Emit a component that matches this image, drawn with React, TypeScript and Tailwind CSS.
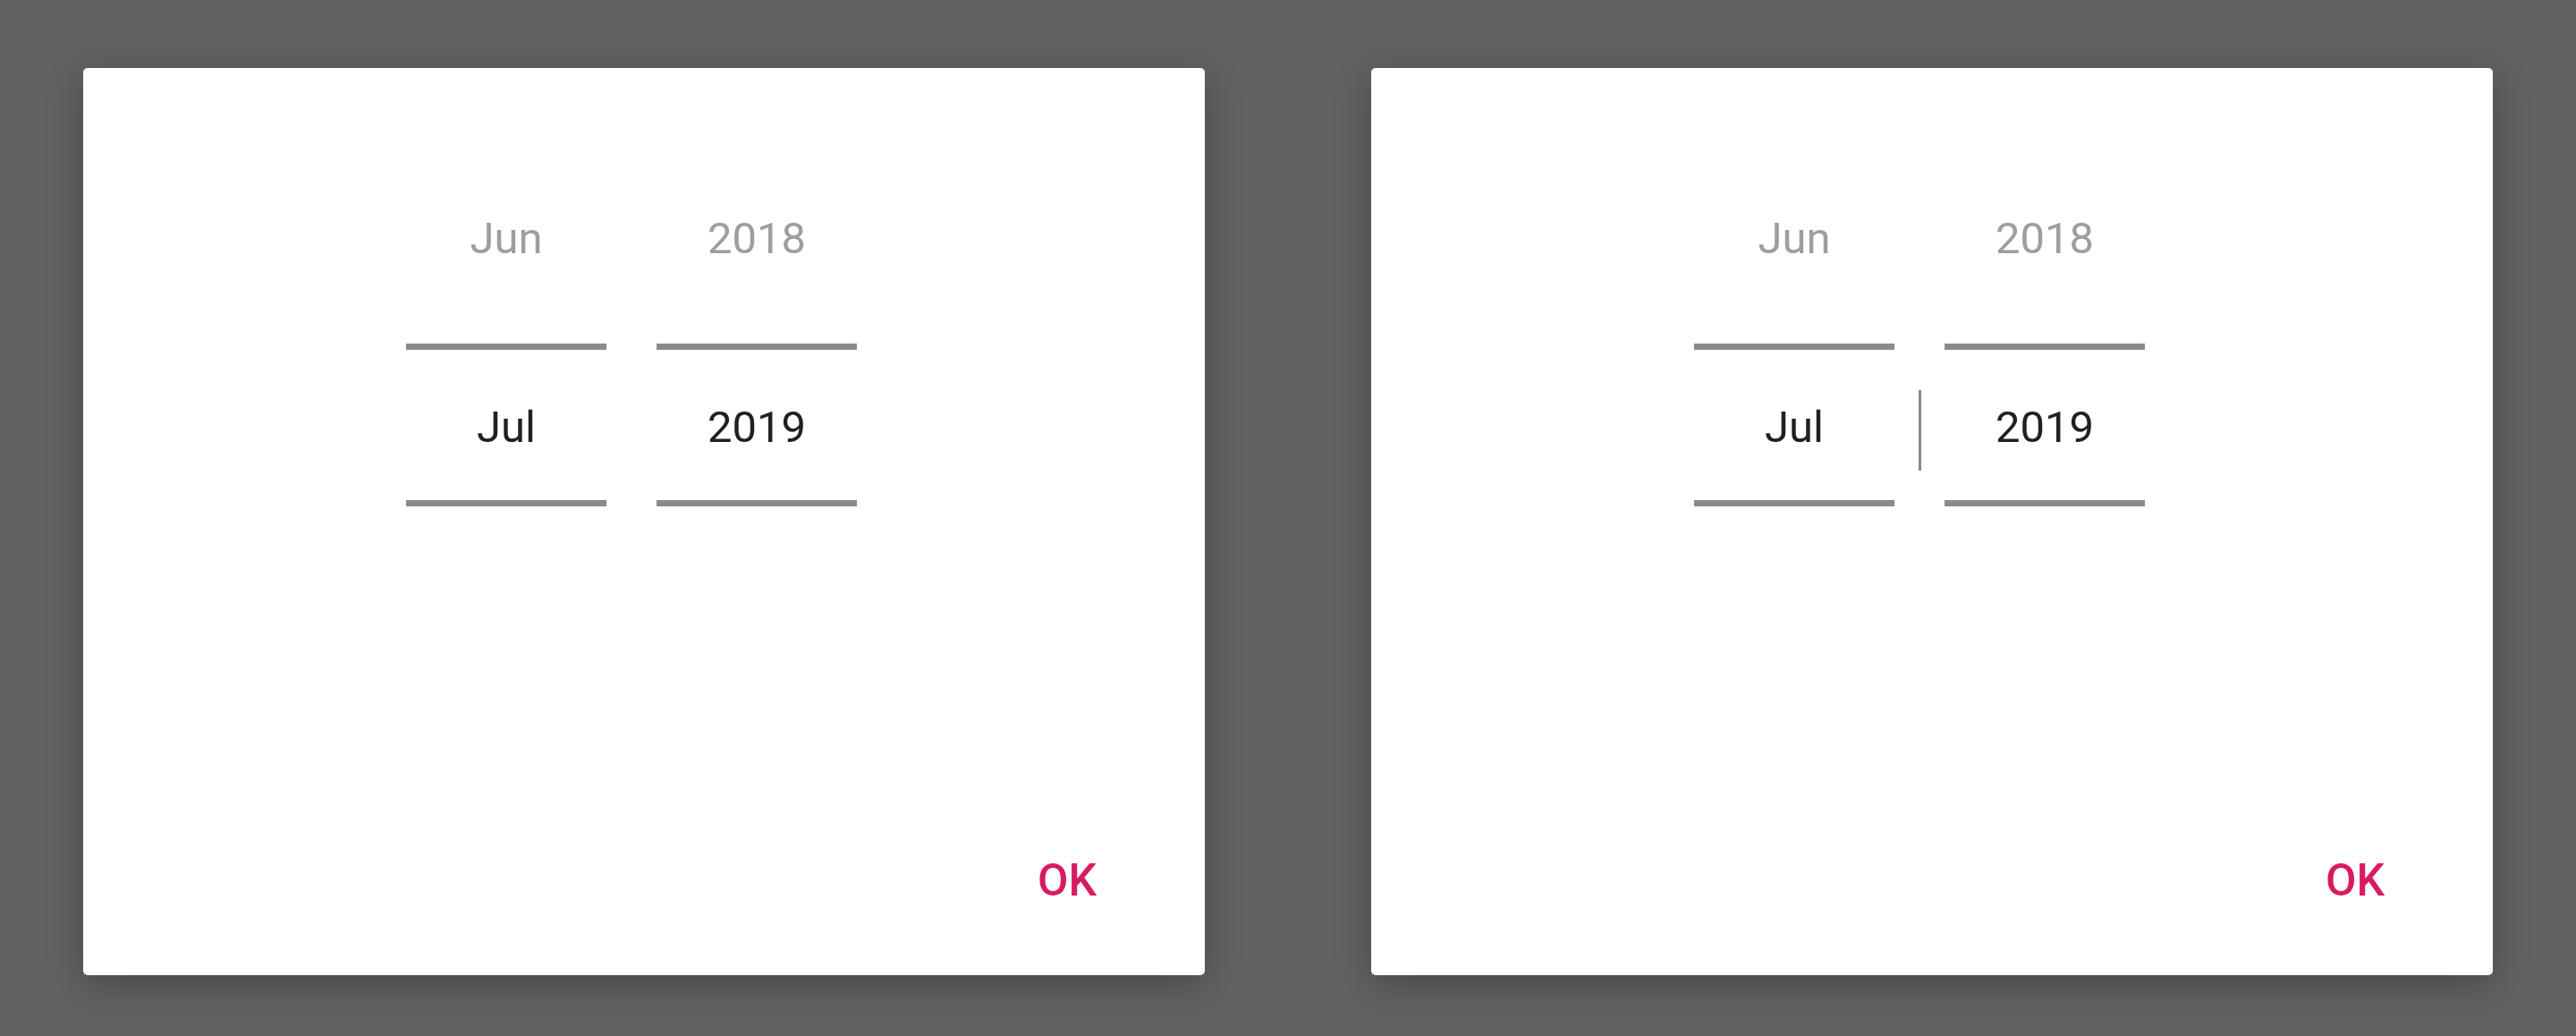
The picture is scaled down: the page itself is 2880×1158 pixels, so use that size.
import React from "react";

const font = { fontFamily: "Roboto, 'Noto Sans', sans-serif" };

function Column({ prev, current }: { prev: string; current: string }) {
  return (
    <div className="flex w-[224px] shrink-0 flex-col items-center">
      <div className="h-[49px] text-[49px] leading-[49px] text-[#9e9e9e]">{prev}</div>
      <div className="mt-[93px] h-[7px] w-full bg-[#8a8a8a]" />
      <div className="flex h-[168px] items-center pt-[4px] text-[49px] leading-[49px] text-[#212121]">{current}</div>
      <div className="h-[7px] w-full bg-[#8a8a8a]" />
    </div>
  );
}

function PickerCard({ focused }: { focused?: boolean }) {
  return (
    <div className="flex h-[1014px] w-[1254px] shrink-0 flex-col rounded-[5px] bg-white shadow-[0_10px_40px_rgba(0,0,0,0.28)]">
      <div className="flex pl-[361px] pt-[166px]">
        <Column prev="Jun" current="Jul" />
        <div className="flex w-[56px] shrink-0 justify-center pt-[194px]">
          {focused && <div className="h-[90px] w-[3px] bg-[#8a8a8a]" />}
        </div>
        <Column prev="2018" current="2019" />
      </div>
      <button className="mb-[81px] mr-[121px] mt-auto self-end text-[50px] font-medium leading-[50px] text-[#d81b60]">
        OK
      </button>
    </div>
  );
}

export default function App() {
  return (
    <div style={font} className="flex h-[1158px] w-[2880px] gap-[186px] bg-[#626262] px-[93px] pt-[76px]">
      <PickerCard />
      <PickerCard focused />
    </div>
  );
}
